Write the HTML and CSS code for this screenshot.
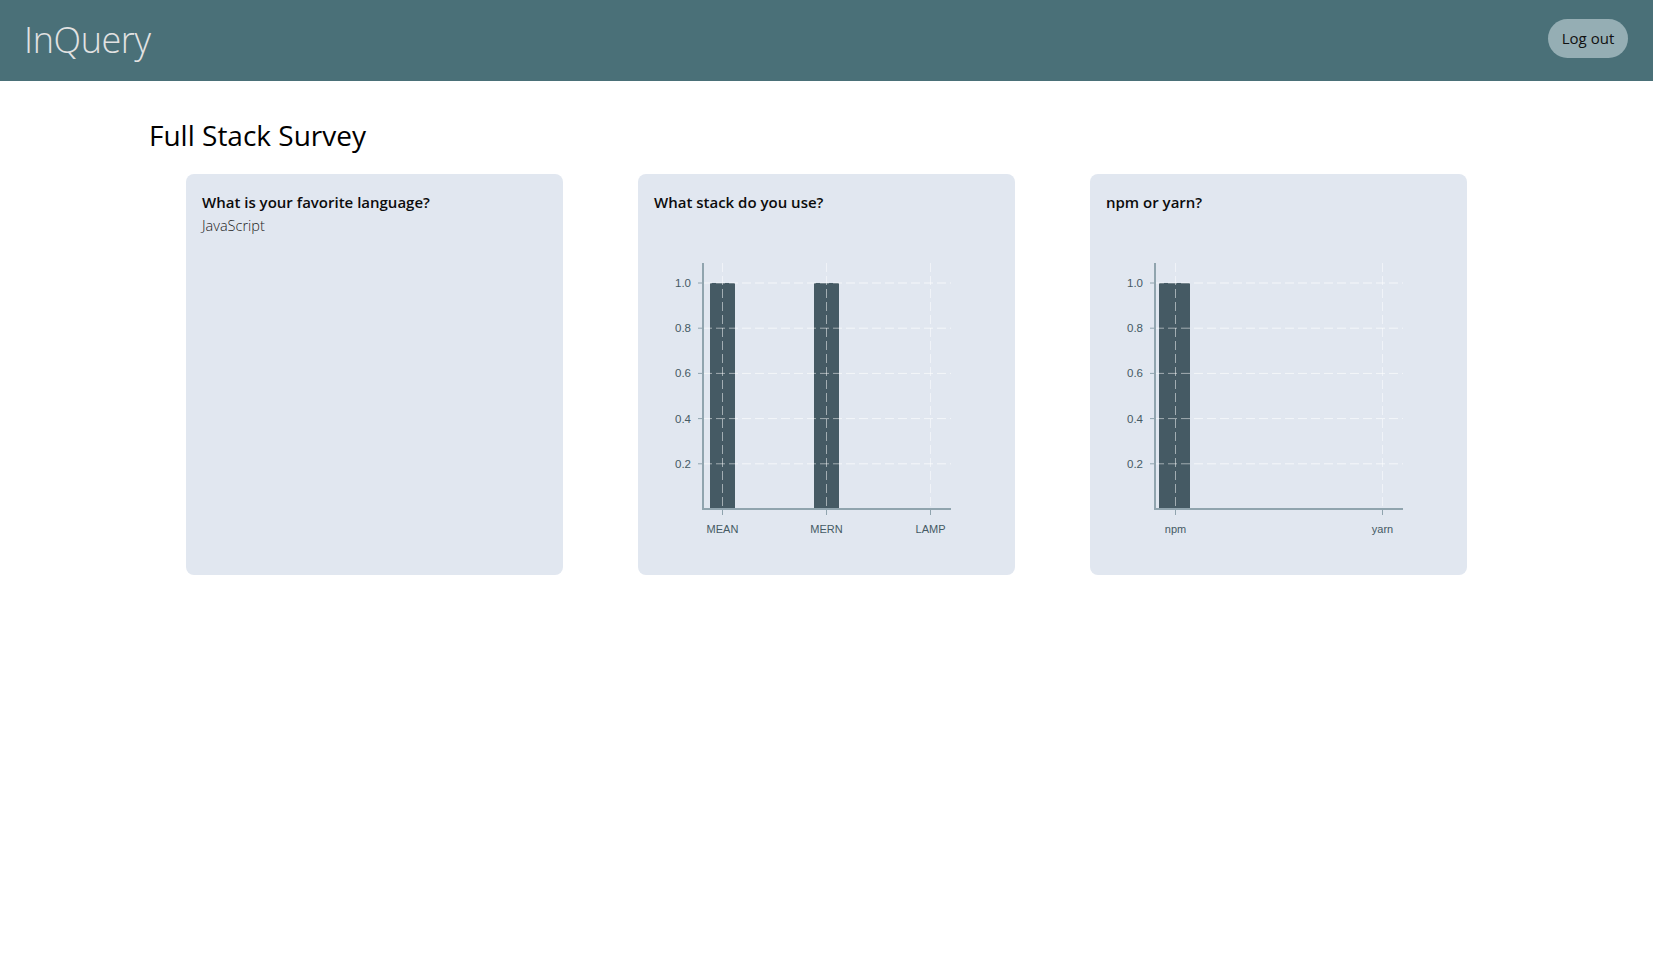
FILE: index.html
```html
<!DOCTYPE html>
<html lang="en">
<head>
<meta charset="utf-8">
<title>InQuery</title>
<link rel="stylesheet" href="styles.css">
</head>
<body>
<header class="topbar">
  <div class="brand">InQuery</div>
  <button class="logout">Log out</button>
</header>
<main class="page">
  <h1 class="survey-title">Full Stack Survey</h1>
  <section class="cards">
    <article class="card">
      <h3 class="card-title">What is your favorite language?</h3>
      <p class="answer">JavaScript</p>
    </article>
    <article class="card">
      <h3 class="card-title">What stack do you use?</h3>
      <svg class="chart" width="345" height="330" viewBox="0 0 345 330">
        <g class="grid">
          <line x1="49" y1="59" x2="297" y2="59"/>
          <line x1="49" y1="104.2" x2="297" y2="104.2"/>
          <line x1="49" y1="149.4" x2="297" y2="149.4"/>
          <line x1="49" y1="194.6" x2="297" y2="194.6"/>
          <line x1="49" y1="239.8" x2="297" y2="239.8"/>
        </g>
        <g class="bars">
          <rect x="56" y="59" width="25" height="226" rx="1"/>
          <rect x="160" y="59" width="25" height="226" rx="1"/>
        </g>
        <g class="grid grid-over">
          <line x1="49" y1="59" x2="297" y2="59"/>
          <line x1="49" y1="104.2" x2="297" y2="104.2"/>
          <line x1="49" y1="149.4" x2="297" y2="149.4"/>
          <line x1="49" y1="194.6" x2="297" y2="194.6"/>
          <line x1="49" y1="239.8" x2="297" y2="239.8"/>
          <line x1="68.5" y1="39" x2="68.5" y2="285"/>
          <line x1="172.5" y1="39" x2="172.5" y2="285"/>
          <line x1="276.5" y1="39" x2="276.5" y2="285"/>
        </g>
        <g class="axis">
          <line x1="49" y1="39" x2="49" y2="286"/>
          <line x1="48" y1="285" x2="297" y2="285"/>
          <line class="tick" x1="44" y1="59" x2="49" y2="59"/>
          <line class="tick" x1="44" y1="104.2" x2="49" y2="104.2"/>
          <line class="tick" x1="44" y1="149.4" x2="49" y2="149.4"/>
          <line class="tick" x1="44" y1="194.6" x2="49" y2="194.6"/>
          <line class="tick" x1="44" y1="239.8" x2="49" y2="239.8"/>
          <line class="tick" x1="68.5" y1="285" x2="68.5" y2="291"/>
          <line class="tick" x1="172.5" y1="285" x2="172.5" y2="291"/>
          <line class="tick" x1="276.5" y1="285" x2="276.5" y2="291"/>
        </g>
        <g class="ylabels">
          <text x="37" y="63">1.0</text>
          <text x="37" y="108.2">0.8</text>
          <text x="37" y="153.4">0.6</text>
          <text x="37" y="198.6">0.4</text>
          <text x="37" y="243.8">0.2</text>
        </g>
        <g class="xlabels">
          <text x="68.5" y="309">MEAN</text>
          <text x="172.5" y="309">MERN</text>
          <text x="276.5" y="309">LAMP</text>
        </g>
      </svg>
    </article>
    <article class="card">
      <h3 class="card-title">npm or yarn?</h3>
      <svg class="chart" width="345" height="330" viewBox="0 0 345 330">
        <g class="grid">
          <line x1="49" y1="59" x2="297" y2="59"/>
          <line x1="49" y1="104.2" x2="297" y2="104.2"/>
          <line x1="49" y1="149.4" x2="297" y2="149.4"/>
          <line x1="49" y1="194.6" x2="297" y2="194.6"/>
          <line x1="49" y1="239.8" x2="297" y2="239.8"/>
        </g>
        <g class="bars">
          <rect x="53" y="59" width="31" height="226" rx="1"/>
        </g>
        <g class="grid grid-over">
          <line x1="49" y1="59" x2="297" y2="59"/>
          <line x1="49" y1="104.2" x2="297" y2="104.2"/>
          <line x1="49" y1="149.4" x2="297" y2="149.4"/>
          <line x1="49" y1="194.6" x2="297" y2="194.6"/>
          <line x1="49" y1="239.8" x2="297" y2="239.8"/>
          <line x1="69.5" y1="39" x2="69.5" y2="285"/>
          <line x1="276.5" y1="39" x2="276.5" y2="285"/>
        </g>
        <g class="axis">
          <line x1="49" y1="39" x2="49" y2="286"/>
          <line x1="48" y1="285" x2="297" y2="285"/>
          <line class="tick" x1="44" y1="59" x2="49" y2="59"/>
          <line class="tick" x1="44" y1="104.2" x2="49" y2="104.2"/>
          <line class="tick" x1="44" y1="149.4" x2="49" y2="149.4"/>
          <line class="tick" x1="44" y1="194.6" x2="49" y2="194.6"/>
          <line class="tick" x1="44" y1="239.8" x2="49" y2="239.8"/>
          <line class="tick" x1="69.5" y1="285" x2="69.5" y2="291"/>
          <line class="tick" x1="276.5" y1="285" x2="276.5" y2="291"/>
        </g>
        <g class="ylabels">
          <text x="37" y="63">1.0</text>
          <text x="37" y="108.2">0.8</text>
          <text x="37" y="153.4">0.6</text>
          <text x="37" y="198.6">0.4</text>
          <text x="37" y="243.8">0.2</text>
        </g>
        <g class="xlabels">
          <text x="69.5" y="309">npm</text>
          <text x="276.5" y="309">yarn</text>
        </g>
      </svg>
    </article>
  </section>
</main>
</body>
</html>
```

FILE: styles.css
```css
* { box-sizing: border-box; }

body {
  margin: 0;
  font-family: "Open Sans", "Noto Sans", sans-serif;
  color: #111;
  background: #fff;
}

.topbar {
  height: 81px;
  background: #4a7078;
  display: flex;
  align-items: center;
  justify-content: space-between;
  padding: 0 25px 0 24px;
}

.brand {
  font-size: 36px;
  font-weight: 300;
  color: #e2e2e2;
  letter-spacing: -0.4px;
  margin-top: -2px;
}

.logout {
  height: 39px;
  width: 80px;
  border: none;
  border-radius: 20px;
  background: #95aeb4;
  color: #111;
  font-family: inherit;
  font-size: 15px;
  padding: 0;
  margin-top: -5px;
}

.page {
  padding: 34px 0 0;
}

.survey-title {
  margin: 0 0 19px 149px;
  font-size: 28px;
  font-weight: 400;
  line-height: 40px;
  color: #000;
}

.cards {
  display: flex;
  justify-content: center;
  gap: 75px;
}

.card {
  width: 377px;
  height: 401px;
  background: #e1e7f0;
  border-radius: 8px;
  padding: 17px 16px 16px;
}

.card-title {
  margin: 0;
  font-size: 15px;
  font-weight: 600;
  line-height: 22px;
  color: #0c0c0c;
}

.answer {
  margin: 1px 0 0;
  font-size: 14.5px;
  font-weight: 300;
  line-height: 24px;
  color: #222;
}

.chart {
  display: block;
  margin-top: 11px;
  font-family: "Liberation Sans", Arial, sans-serif;
}

.grid line {
  stroke: rgba(255, 255, 255, 0.28);
  stroke-width: 1;
  stroke-dasharray: 9 4;
}

.grid-over line {
  stroke: rgba(255, 255, 255, 0.5);
}

.bars rect {
  fill: #455a64;
}

.axis line {
  stroke: #90a4ae;
  stroke-width: 2;
}

.axis .tick {
  stroke-width: 1;
}

.ylabels text {
  font-size: 11.5px;
  fill: #455a64;
  text-anchor: end;
}

.xlabels text {
  font-size: 11px;
  fill: #455a64;
  text-anchor: middle;
}
```
